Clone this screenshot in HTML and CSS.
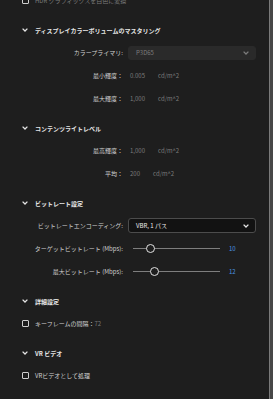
FILE: index.html
```html
<!DOCTYPE html>
<html lang="ja">
<head>
    <meta charset="UTF-8">
    <meta name="viewport" content="width=device-width, initial-scale=1.0">
    <title>書き出し設定</title>
    <link rel="stylesheet" href="styles.css">
</head>
<body>
    <div class="panel">
        <div class="check-row top-row">
            <span class="checkbox"></span>
            <span class="check-label muted">HDR グラフィックスを白色に変換</span>
        </div>

        <section class="group">
            <div class="group-head">
                <svg class="chevron" viewBox="0 0 6 4"><path d="M0.6 0.6 L3 3 L5.4 0.6"/></svg>
                <span>ディスプレイカラーボリュームのマスタリング</span>
            </div>
            <div class="field">
                <span class="label">カラープライマリ:</span>
                <div class="select disabled">
                    <span>P3D65</span>
                    <svg class="chevron" viewBox="0 0 6 4"><path d="M0.6 0.6 L3 3 L5.4 0.6"/></svg>
                </div>
            </div>
            <div class="field">
                <span class="label">最小輝度：</span>
                <span class="value">0.005</span>
                <span class="unit">cd/m^2</span>
            </div>
            <div class="field">
                <span class="label">最大輝度：</span>
                <span class="value">1,000</span>
                <span class="unit">cd/m^2</span>
            </div>
        </section>

        <section class="group">
            <div class="group-head">
                <svg class="chevron" viewBox="0 0 6 4"><path d="M0.6 0.6 L3 3 L5.4 0.6"/></svg>
                <span>コンテンツライトレベル</span>
            </div>
            <div class="field">
                <span class="label">最高輝度：</span>
                <span class="value">1,000</span>
                <span class="unit">cd/m^2</span>
            </div>
            <div class="field">
                <span class="label">平均：</span>
                <span class="value">200</span>
                <span class="unit">cd/m^2</span>
            </div>
        </section>

        <section class="group">
            <div class="group-head">
                <svg class="chevron" viewBox="0 0 6 4"><path d="M0.6 0.6 L3 3 L5.4 0.6"/></svg>
                <span>ビットレート設定</span>
            </div>
            <div class="field">
                <span class="label">ビットレートエンコーディング:</span>
                <div class="select">
                    <span>VBR, 1 パス</span>
                    <svg class="chevron" viewBox="0 0 6 4"><path d="M0.6 0.6 L3 3 L5.4 0.6"/></svg>
                </div>
            </div>
            <div class="field">
                <span class="label">ターゲットビットレート (Mbps):</span>
                <div class="slider">
                    <span class="track"></span>
                    <span class="knob" style="left: 19.5%"></span>
                </div>
                <span class="slider-value">10</span>
            </div>
            <div class="field">
                <span class="label">最大ビットレート (Mbps):</span>
                <div class="slider">
                    <span class="track"></span>
                    <span class="knob" style="left: 24%"></span>
                </div>
                <span class="slider-value">12</span>
            </div>
        </section>

        <section class="group">
            <div class="group-head">
                <svg class="chevron" viewBox="0 0 6 4"><path d="M0.6 0.6 L3 3 L5.4 0.6"/></svg>
                <span>詳細設定</span>
            </div>
            <div class="check-row">
                <span class="checkbox"></span>
                <span class="check-label">キーフレームの間隔：<span class="muted">72</span></span>
            </div>
        </section>

        <section class="group">
            <div class="group-head">
                <svg class="chevron" viewBox="0 0 6 4"><path d="M0.6 0.6 L3 3 L5.4 0.6"/></svg>
                <span>VR ビデオ</span>
            </div>
            <div class="check-row">
                <span class="checkbox"></span>
                <span class="check-label">VRビデオとして処理</span>
            </div>
        </section>
    </div>
</body>
</html>
```

FILE: styles.css
```css
body, html {
    margin: 0;
    padding: 0;
    height: 100%;
    overflow: hidden;
    background-color: #474747;
    font-family: "Noto Sans CJK JP", "Noto Sans", sans-serif;
    font-size: 6px;
    color: #c9c9c9;
}

.panel {
    width: 269px;
    height: 100%;
    background-color: #1e1e1e;
    border-right: 1px solid #7a7a7a;
    overflow: hidden;
}

.top-row {
    margin-top: -11px;
}

.group {
    margin-top: 7px;
}

.group-head {
    display: flex;
    align-items: center;
    gap: 7px;
    height: 22px;
    padding-left: 22px;
    font-weight: bold;
    color: #e6e6e6;
}

.chevron {
    width: 6px;
    height: 4px;
    fill: none;
    stroke: #e6e6e6;
    stroke-width: 1.3;
}

.field {
    display: flex;
    align-items: center;
    height: 23px;
}

.label {
    width: 123px;
    flex-shrink: 0;
    text-align: right;
    color: #cfcfcf;
}

.value {
    margin-left: 7px;
    margin-right: 13px;
    color: #7c7c7c;
}

.unit {
    color: #7c7c7c;
}

.select {
    display: flex;
    align-items: center;
    justify-content: space-between;
    box-sizing: border-box;
    width: 128px;
    height: 15px;
    margin-left: 5px;
    padding: 0 6px 0 7px;
    background-color: #121212;
    border: 1px solid #4c4c4c;
    border-radius: 3px;
    color: #ececec;
}

.select.disabled {
    height: 14px;
    background-color: #2a2a2a;
    border-color: #2a2a2a;
    color: #7c7c7c;
}

.select.disabled .chevron {
    stroke: #7c7c7c;
}

.slider {
    position: relative;
    width: 87px;
    height: 9px;
    margin-left: 10px;
}

.track {
    position: absolute;
    left: 0;
    right: 0;
    top: 4px;
    height: 1px;
    background-color: #7e7e7e;
}

.knob {
    position: absolute;
    top: 0;
    width: 9px;
    height: 9px;
    box-sizing: border-box;
    margin-left: -4px;
    border: 1.5px solid #e2e2e2;
    border-radius: 50%;
    background-color: #1e1e1e;
}

.slider-value {
    margin-left: 9px;
    color: #4b93e0;
}

.check-row {
    display: flex;
    align-items: center;
    gap: 6px;
    height: 23px;
    padding-left: 22px;
}

.checkbox {
    width: 7px;
    height: 7px;
    box-sizing: border-box;
    border: 1.3px solid #cfcfcf;
    border-radius: 1px;
}

.check-label {
    color: #d2d2d2;
}

.muted {
    color: #7c7c7c;
}
```
